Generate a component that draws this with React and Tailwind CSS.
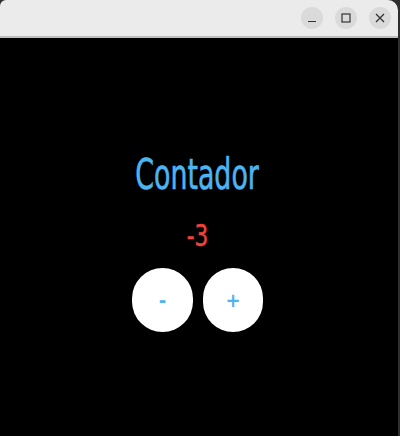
export default function App() {
  return (
    <div className="w-[400px] h-[436px] bg-[#2e2e2e] overflow-hidden">
      <div className="w-[398px] h-full rounded-tl-[6px] rounded-tr-[10px] overflow-hidden flex flex-col">
        {/* barra de título */}
        <div className="h-[38px] shrink-0 bg-[#ebebeb] border-b-2 border-[#bdbdbd] flex items-center justify-end gap-[12px] pr-[7px]">
          <button className="w-[22px] h-[22px] rounded-full bg-[#dadada] flex items-center justify-center">
            <svg width="10" height="10" viewBox="0 0 10 10"><path d="M1 8.5h8" stroke="#333" strokeWidth="1.2" /></svg>
          </button>
          <button className="w-[22px] h-[22px] rounded-full bg-[#dadada] flex items-center justify-center">
            <svg width="10" height="10" viewBox="0 0 10 10"><rect x="1" y="1" width="8" height="8" fill="none" stroke="#333" strokeWidth="1.2" /></svg>
          </button>
          <button className="w-[22px] h-[22px] rounded-full bg-[#dadada] flex items-center justify-center">
            <svg width="10" height="10" viewBox="0 0 10 10"><path d="M1 1l8 8M9 1l-8 8" stroke="#333" strokeWidth="1.3" /></svg>
          </button>
        </div>

        {/* contenido */}
        <div className="flex-1 bg-black flex flex-col items-center pt-[116px] pr-[3px] font-['DejaVu_Sans_Condensed','DejaVu_Sans',sans-serif]">
          <h1 className="text-[42px] leading-none text-[#4db4f2] scale-x-[0.71] [-webkit-text-stroke:0.6px_#4db4f2]">Contador</h1>
          <p className="mt-[25px] text-[30px] leading-none text-[#f0443a] scale-x-[0.8] [-webkit-text-stroke:0.4px_#f0443a]">-3</p>
          <div className="mt-[17px] flex gap-[10px]">
            <button className="w-[61px] h-[64px] rounded-full bg-white text-[#4db4f2] text-[20px] font-bold flex items-center justify-center">-</button>
            <button className="w-[60px] h-[64px] rounded-full bg-white text-[#4db4f2] text-[20px] font-bold flex items-center justify-center">+</button>
          </div>
        </div>
      </div>
    </div>
  );
}
